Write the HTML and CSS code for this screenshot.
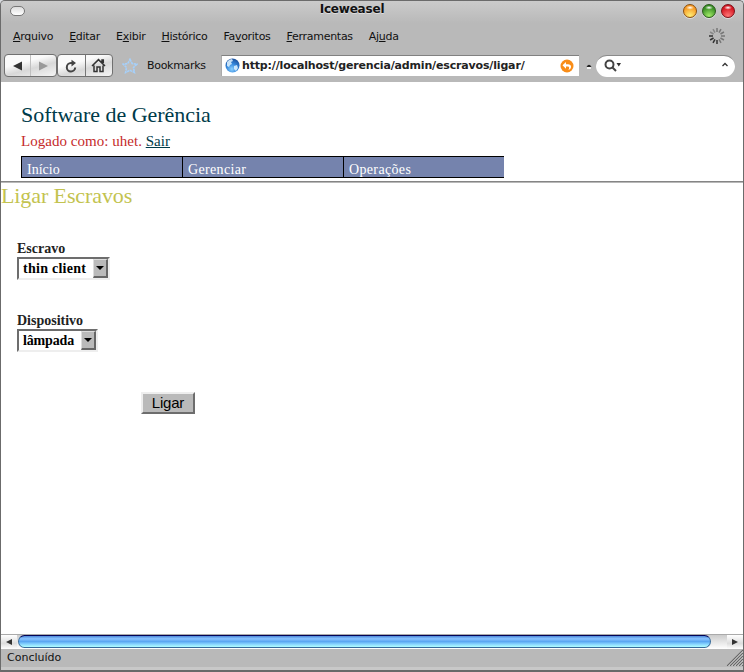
FILE: index.html
```
<!DOCTYPE html>
<html lang="pt">
<head>
<meta charset="utf-8">
<title>Iceweasel</title>
<link rel="stylesheet" href="styles.css">
</head>
<body>
<div class="window">
  <header class="titlebar">
    <span class="pill"></span>
    <span class="title">Iceweasel</span>
    <span class="lights"><i class="light amber"></i><i class="light green"></i><i class="light red"></i></span>
  </header>
  <nav class="menubar">
    <span><u>A</u>rquivo</span><span><u>E</u>ditar</span><span>E<u>x</u>ibir</span><span><u>H</u>istórico</span><span>Fa<u>v</u>oritos</span><span><u>F</u>erramentas</span><span>Aj<u>u</u>da</span>
    <svg class="throbber" width="18" height="18" viewBox="-9 -9 18 18" stroke-width="1.5">
      <g stroke="#777"><path d="M0-4V-8"/><path d="M0-4V-8" transform="rotate(30)"/><path d="M0-4V-8" transform="rotate(60)"/><path d="M0-4V-8" transform="rotate(90)"/><path d="M0-4V-8" transform="rotate(120)"/><path d="M0-4V-8" transform="rotate(150)"/></g>
      <g stroke="#333"><path d="M0-4V-8" transform="rotate(180)"/><path d="M0-4V-8" transform="rotate(210)"/><path d="M0-4V-8" transform="rotate(240)"/><path d="M0-4V-8" transform="rotate(270)"/></g>
      <g stroke="#888"><path d="M0-4V-8" transform="rotate(300)"/><path d="M0-4V-8" transform="rotate(330)"/></g>
    </svg>
  </nav>
  <div class="toolbar">
    <div class="group history">
      <span class="btn"><svg width="10" height="10"><path d="M0 5 9 .5v9z" fill="#333"/></svg></span>
      <span class="btn"><svg width="10" height="10"><path d="M9 5 0 .5v9z" fill="#999"/></svg></span>
    </div>
    <div class="group actions">
      <span class="btn"><svg width="14" height="14" fill="none" stroke="#444" stroke-width="2"><path d="M11.200 8.500A4.200 4.200 0 1 1 7 4.100h1"/><path d="M7.500.800 12 4.100 7.500 7.400z" fill="#444" stroke="none"/></svg></span>
      <span class="btn"><svg width="15" height="15" fill="none" stroke="#333" stroke-width="1.5"><path d="M1 8 7.500 1.600 14 8M3 7.500v6h3V9h3v4.500h3v-6M11 4V2h1.300v3"/></svg></span>
    </div>
    <svg class="star" width="16" height="16"><path d="M8 1.300 10.200 5.500 14.800 6.200 11.500 9.500 12.400 14.500 8 12.300 3.600 14.500 4.500 9.500 1.200 6.200 5.800 5.500z" fill="#bdbdbd" stroke="#a5d0fb" stroke-width="1.600" stroke-dasharray="2.500 .6"/></svg>
    <span class="bookmarks">Bookmarks</span>
    <div class="address">
      <svg width="15" height="15"><defs><radialGradient id="globe" cx=".45" cy=".75" r=".75"><stop offset="0" stop-color="#8bd0ff"/><stop offset=".5" stop-color="#3588dc"/><stop offset="1" stop-color="#1b4f9b"/></radialGradient></defs><circle cx="7.500" cy="7.500" r="7" fill="url(#globe)"/><path d="M2 4q2-3 5-3l1 2-2 1 1 2-2 1-1 2-2-1zM9 8l3-1 1 3-2 3-2-2z" fill="#e3f4ff" opacity=".85"/></svg>
      <span class="url">http://localhost/gerencia/admin/escravos/ligar/</span>
      <svg class="go" width="14" height="14"><circle cx="7" cy="7" r="6.500" fill="#f98d18"/><path d="M2.500 6.300 6 3v2.200h2c4 0 4 5 .3 5.700C10 9 9 7.500 7.700 7.500H6v2.200z" fill="#fff"/></svg>
    </div>
    <svg class="caret" width="6" height="6"><path d="M.5 4Q3-.5 5.500 4z" fill="#222"/><path d="M1 5h4" stroke="#eee" stroke-width="2"/></svg>
    <div class="search">
      <svg width="18" height="14" fill="none" stroke="#444" stroke-width="2"><circle cx="5.500" cy="5.500" r="4"/><path d="m8 8 4 4"/><path d="M12.500 4H17l-2.200 3.500z" fill="#333" stroke="none"/></svg>
      <svg class="more" width="6" height="5" fill="none" stroke="#333" stroke-width="1.300"><path d="M.5 4 3 1.500 5.500 4"/></svg>
    </div>
  </div>
  <main class="page">
    <h1>Software de Gerência</h1>
    <p class="login">Logado como: uhet. <a href="#">Sair</a></p>
    <nav class="tabs"><span>Início</span><span>Gerenciar</span><span>Operações</span></nav>
    <div class="rule"></div>
    <h2>Ligar Escravos</h2>
    <form>
      <div class="field"><label>Escravo</label><div class="select slave"><span>thin client</span><i class="drop"></i></div></div>
      <div class="field"><label>Dispositivo</label><div class="select device"><span>lâmpada</span><i class="drop"></i></div></div>
      <button type="button">Ligar</button>
    </form>
  </main>
  <div class="scrollbar">
    <span class="arrow"><svg width="6" height="6"><path d="M0 3 6 0v6z" fill="#333"/></svg></span>
    <div class="track"><div class="thumb"></div></div>
    <span class="arrow"><svg width="6" height="6"><path d="M6 3 0 0v6z" fill="#333"/></svg></span>
  </div>
  <footer class="status"><span>Concluído</span>
    <svg width="17" height="17"><path d="M0 17 17 0V17z" fill="#d8d8d8"/><path d="M1 17 17 1M4 17 17 4M7 17 17 7M10 17 17 10M13 17 17 13M16 17l1-1" stroke="#666" stroke-width="1.200"/></svg>
  </footer>
  <div class="frame"></div>
</div>
</body>
</html>
```

FILE: styles.css
```
* { box-sizing: border-box; }
body { margin: 0; background: #d7dade; }
svg { display: block; flex: none; }
.window {
  width: 744px; height: 672px; display: flex; flex-direction: column;
  border: 1px solid #6b6b6b; border-bottom: 0; border-radius: 5px 5px 0 0;
  overflow: hidden; background: #b9b9b9;
  font: 11px "DejaVu Sans", sans-serif; color: #111;
}
.titlebar {
  height: 22px; flex: none; display: grid; grid-template-columns: 64px 1fr 64px;
  background: linear-gradient(#cbcbcb, #b9b9b9);
}
.pill { width: 15px; height: 10px; margin: 5px 0 0 9px; border: 1px solid #777; border-radius: 5px; background: linear-gradient(#ddd, #fff); }
.title { text-align: center; padding-right: 40px; font-weight: bold; font-size: 12px; letter-spacing: -.2px; line-height: 16px; text-shadow: 0 1px #ddd; }
.lights { display: flex; gap: 5px; padding: 3px 0 0 4px; }
.light { width: 14px; height: 14px; border-radius: 50%; border: 1px solid; box-shadow: 0 1px #ddd; }
.amber { border-color: #895011; background: radial-gradient(ellipse 4px 2px at 50% 22%, #fff, transparent), radial-gradient(circle at 50% 90%, #ffef77, #f79a25 70%); }
.green { border-color: #28591a; background: radial-gradient(ellipse 4px 2px at 50% 22%, #fff, transparent), radial-gradient(circle at 50% 90%, #a2ec68, #388d24 70%); }
.red { border-color: #7b1018; background: radial-gradient(ellipse 4px 2px at 50% 22%, #fff, transparent), radial-gradient(circle at 50% 90%, #ff7777, #d41420 70%); }
.menubar { height: 26px; flex: none; display: flex; align-items: center; gap: 16px; padding: 0 17px 0 12px; letter-spacing: -.28px; }
.menubar u { text-underline-offset: 1px; }
.throbber { margin-left: auto; }
.toolbar { height: 33px; flex: none; display: flex; align-items: center; padding: 0 8px 0 3px; }
.group { display: flex; height: 23px; border: 1px solid #707070; border-radius: 4px; overflow: hidden; background: linear-gradient(165deg, #fafafa 0 35%, #d8d8d8 60%, #f5f5f5); }
.history { width: 53px; }
.actions { width: 56px; }
.btn { flex: 1; display: flex; align-items: center; justify-content: center; }
.btn + .btn { border-left: 1px solid #c0c0c0; }
.actions .btn + .btn { border-color: #777; }
.star { margin-left: 9px; }
.bookmarks { width: 74px; margin: 0 0 1px 9px; letter-spacing: -.3px; }
.address { width: 358px; height: 21px; display: flex; align-items: center; padding: 0 5px 0 3px; border-top: 1px solid #818181; background: #fff; border-left: 1px solid #aaa; }
.address svg { margin-bottom: 1px; }
.url { margin: 0 0 2px 2px; font-weight: bold; white-space: nowrap; letter-spacing: -.16px; color: #222; }
.address .go { margin-left: auto; }
.caret { margin-left: 7px; }
.search { flex: 1; height: 22px; margin-left: 4px; border-top: 1px solid #8a8a8a; border-radius: 11px; background: #fff; display: flex; align-items: center; justify-content: space-between; padding: 0 7px 0 8px; }
.more { margin-bottom: 4px; }
.page { height: 552px; flex: none; background: #fff; font-family: "Liberation Serif", serif; display: flow-root; }
h1, h2 { margin: 0; font-weight: normal; }
h1 { margin: 20px 0 0 20px; font-size: 22px; line-height: 26px; letter-spacing: -.04px; color: #003b4a; }
.login { margin: 3px 0 0 20px; font-size: 15px; line-height: 20px; letter-spacing: .03px; color: #c52b2b; }
.login a { color: #003b4a; }
.tabs { display: grid; grid-template-columns: 161px 161px 161px; width: 483px; height: 22px; margin: 5px 0 0 20px; background: #7583ad; border: solid #000; border-width: 1px 0; }
.tabs span { height: 20px; border-left: 1px solid #000; padding: 4px 0 0 5px; font-size: 14px; letter-spacing: .35px; line-height: 18px; color: #fff; }
.tabs span:first-child { letter-spacing: 0; }
.rule { height: 2px; margin-top: 3px; background: #b8b8b8; border-top: 1px solid #858585; }
h2 { font-size: 22px; line-height: 26px; letter-spacing: -.1px; color: #c3c34f; }
form { padding: 31px 0 0 16px; }
.field { height: 72px; font-weight: bold; font-size: 14px; }
label { display: block; height: 17px; line-height: 17px; color: #222; }
.select { height: 23px; display: flex; justify-content: space-between; border: 2px solid; border-color: #6d6d6d #eee #eee #6d6d6d; padding-left: 4px; line-height: 19px; color: #000; }
.slave { width: 93px; letter-spacing: .27px; }
.device { width: 81px; letter-spacing: -.15px; }
.drop { width: 15px; height: 19px; background: #bababa; border: 1px solid; border-color: #ddd #666 #666 #ddd; border-width: 1px 2px 2px 1px; display: flex; justify-content: center; padding-top: 6px; }
.drop::before { content: ""; width: 8px; height: 4px; background: #000; clip-path: polygon(0 0, 100% 0, 50% 100%); }
button { display: block; width: 54px; height: 22px; margin: 8px 0 0 124px; padding: 0; border: 2px solid; border-color: #eee #6d6d6d #6d6d6d #eee; background: #bababa; font: 15px "Liberation Sans", sans-serif; line-height: 18px; letter-spacing: -.2px; color: #000; }
.scrollbar { height: 15px; flex: none; display: flex; border-top: 1px solid #aaa; background: #ddd; }
.arrow { width: 16px; display: flex; align-items: center; justify-content: center; background: linear-gradient(#fff, #ddd 60%, #fff); }
.track { flex: 1; background: linear-gradient(#ccc, #fff); }
.thumb { width: 693px; height: 13px; margin-left: 1px; border: 1px solid #376b9a; border-top: 1px solid #030355; border-radius: 7px; background: linear-gradient(#4c88d8, #8ac4ff 25%, #5ba7f2 50%, #89d6ff 75%, #b0ffff); }
.status { height: 18px; flex: none; display: flex; justify-content: space-between; padding-left: 6px; line-height: 17px; }
.frame { flex: 1; background: #c8c8c8; border-bottom: 2px solid #696969; }
```
